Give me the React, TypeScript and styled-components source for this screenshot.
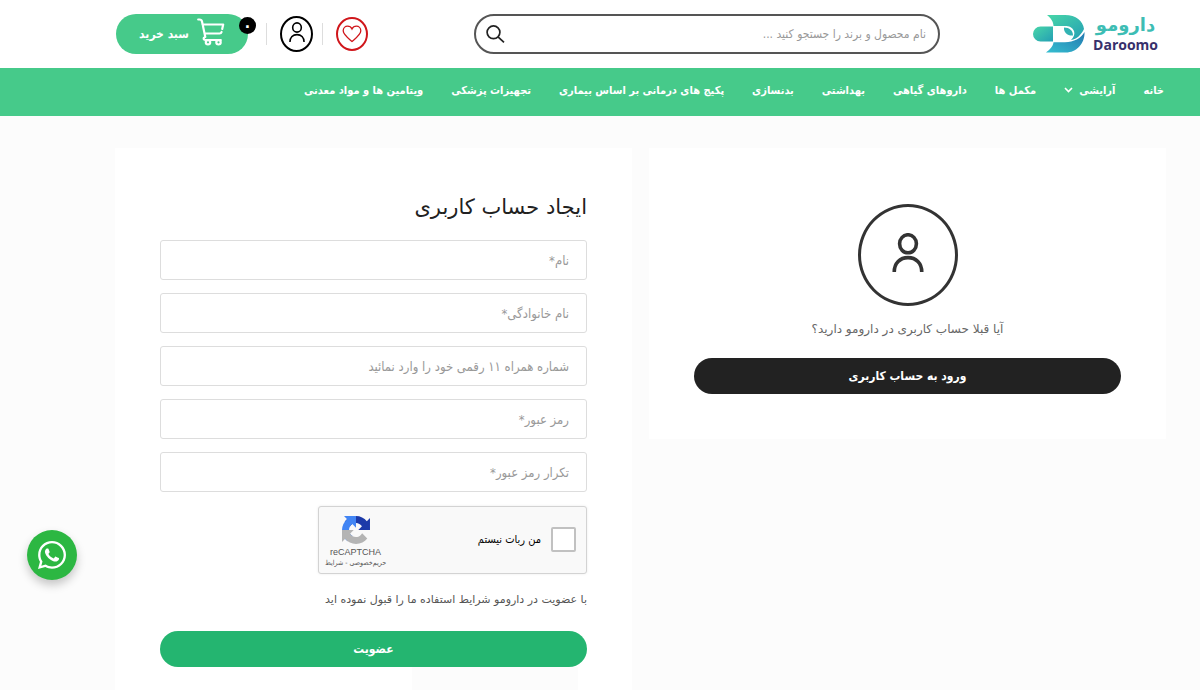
import React from "react";
import styled, { createGlobalStyle } from "styled-components";
import { FaWhatsapp } from "react-icons/fa";

const condensed = `"DejaVu Sans Condensed", "DejaVu Sans", sans-serif`;

const GlobalStyle = createGlobalStyle`
  *, *::before, *::after { box-sizing: border-box; }
  body {
    margin: 0;
    background: #fcfcfc;
    color: #212121;
    font-family: "DejaVu Sans", sans-serif;
    font-size: 12px;
  }
  a { color: inherit; text-decoration: none; }
  button, input { font: inherit; }
`;

const Page = styled.div`
  direction: rtl;
  display: flex;
  flex-direction: column;
  min-height: 100vh;
`;

const Header = styled.header`
  display: grid;
  grid-template-columns: 226px minmax(0, 1fr) 358px;
  align-items: center;
  height: 68px;
  padding: 0 34px 0 116px;
  background: #fff;
`;

const Logo = styled.a`
  display: flex;
  align-items: center;
  gap: 8px;
  padding-right: 8px;
`;

const LogoWords = styled.span`
  display: flex;
  flex-direction: column;
  align-items: center;
`;

const LogoFa = styled.span`
  color: #3dbdb4;
  font-size: 18px;
  font-weight: 700;
  line-height: 20px;
`;

const LogoEn = styled.span`
  color: #37306b;
  font-family: "Open Sans", sans-serif;
  font-size: 14px;
  font-weight: 700;
  line-height: 19px;
`;

const Search = styled.form`
  display: flex;
  align-items: center;
  height: 40px;
  padding: 0 12px 0 10px;
  border: 2px solid #555;
  border-radius: 20px;
`;

const SearchInput = styled.input`
  flex: 1;
  min-width: 0;
  padding: 0;
  border: 0;
  outline: 0;
  background: none;
  font-family: ${condensed};
  &::placeholder { color: #999; opacity: 1; }
`;

const IconButton = styled.button`
  display: flex;
  padding: 0;
  border: 0;
  background: none;
`;

const Actions = styled.div`
  display: flex;
  align-items: center;
  justify-content: flex-end;
`;

const Round = styled.a<{ $color: string; $w: number; $h: number; $lift?: number }>`
  display: flex;
  align-items: center;
  justify-content: center;
  width: ${(p) => p.$w}px;
  height: ${(p) => p.$h}px;
  padding-bottom: ${(p) => p.$lift ?? 0}px;
  border: 2px solid ${(p) => p.$color};
  border-radius: 50%;
  color: ${(p) => p.$color};
`;

const Separator = styled.span`
  width: 1px;
  height: 22px;
  margin: 0 13px 0 9px;
  background: #ddd;
`;

const Cart = styled.a`
  position: relative;
  display: flex;
  align-items: center;
  justify-content: center;
  gap: 8px;
  width: 132px;
  height: 40px;
  margin-inline-start: 9px;
  border-radius: 20px;
  background: #46ca8a;
  color: #fff;
  font-family: ${condensed};
  font-weight: 700;
  svg { margin-bottom: 4px; }
`;

const Badge = styled.span`
  position: absolute;
  top: 3px;
  right: -8px;
  width: 17px;
  height: 17px;
  border-radius: 50%;
  background: #000;
  font-size: 16px;
  line-height: 17px;
  text-align: center;
`;

const Nav = styled.nav`
  display: flex;
  align-items: center;
  gap: 28px;
  height: 48px;
  padding: 0 36px 4px;
  background: #46ca8a;
  color: #fff;
  font-family: ${condensed};
  font-size: 11px;
  font-weight: 700;
  white-space: nowrap;
`;

const NavLink = styled.a`
  display: flex;
  align-items: center;
  gap: 6px;
`;

const Main = styled.main`
  flex: 1;
  display: grid;
  grid-template-columns: 1fr 1fr;
  gap: 17px;
  padding: 32px 34px 0 115px;
`;

const Card = styled.section<{ $short?: boolean }>`
  display: flex;
  flex-direction: column;
  align-self: ${(p) => (p.$short ? "start" : "stretch")};
  padding: ${(p) => (p.$short ? "56px 45px 45px" : "43px 45px 0")};
  background: #fff;
`;

const Avatar = styled.span`
  display: flex;
  align-items: center;
  justify-content: center;
  align-self: center;
  width: 100px;
  height: 102px;
  padding-bottom: 6px;
  border: 3px solid #333;
  border-radius: 50%;
  color: #333;
`;

const Question = styled.p`
  margin: 14px 0 20px;
  color: #666;
  line-height: 18px;
  text-align: center;
`;

const Title = styled.h1`
  margin: 0 0 17px;
  font-size: 21px;
  font-weight: 400;
  line-height: 32px;
`;

const Pill = styled.button<{ $color: string }>`
  width: 100%;
  height: 36px;
  padding: 0;
  border: 0;
  border-radius: 18px;
  background: ${(p) => p.$color};
  color: #fff;
  font-family: ${condensed};
  font-weight: 700;
`;

const Form = styled.form`
  display: flex;
  flex-direction: column;
`;

const Field = styled.input`
  width: 100%;
  height: 40px;
  margin-bottom: 13px;
  padding: 0 17px;
  border: 1px solid #ddd;
  border-radius: 3px;
  background: #fff;
  font-family: ${condensed};
  font-size: 13px;
  &::placeholder { color: #999; opacity: 1; }
`;

const Captcha = styled.div`
  display: flex;
  align-items: center;
  justify-content: space-between;
  width: 269px;
  height: 68px;
  margin-top: 1px;
  padding: 0 10px 0 6px;
  border: 1px solid #d3d3d3;
  border-radius: 3px;
  background: #f9f9f9;
  box-shadow: 0 0 3px rgba(0, 0, 0, 0.08);
`;

const CaptchaLabel = styled.label`
  display: flex;
  align-items: center;
  gap: 10px;
  padding-bottom: 2px;
  color: #000;
  font-family: ${condensed};
  font-size: 11px;
`;

const Tick = styled.input`
  appearance: none;
  width: 25px;
  height: 25px;
  margin: 0;
  border: 2px solid #c1c1c1;
  border-radius: 2px;
  background: #fff;
`;

const CaptchaBrand = styled.div`
  display: flex;
  flex-direction: column;
  align-items: center;
  padding-top: 5px;
  color: #555;
  font-family: "Liberation Sans", sans-serif;
  font-size: 9px;
  line-height: 11px;
  white-space: nowrap;
  svg { margin-bottom: 3px; }
`;

const CaptchaTerms = styled.span`
  font-family: ${condensed};
  font-size: 7px;
`;

const Terms = styled.p`
  margin: 17px 0 22px;
  color: #555;
  font-size: 11px;
  line-height: 18px;
`;

const Notice = styled.div`
  flex: 1;
  width: 166px;
  min-height: 23px;
  margin-right: 9px;
  background: #fcfcfc;
`;

const WhatsApp = styled.a`
  position: fixed;
  bottom: 110px;
  left: 27px;
  display: flex;
  align-items: center;
  justify-content: center;
  width: 50px;
  height: 50px;
  border-radius: 50%;
  background: #2cb742;
  box-shadow: 0 5px 10px rgba(0, 0, 0, 0.22);
  color: #fff;
`;

const UserIcon = ({ w, h, stroke }: { w: number; h: number; stroke: number }) => (
  <svg width={w} height={h} viewBox="0 0 30 38" fill="none" stroke="currentColor" strokeWidth={stroke}>
    <ellipse cx="15" cy="10.500" rx="8.200" ry="8.800" />
    <path d="M1.600 38C1.600 29.500 7.200 24 15 24s13.400 5.500 13.400 14" />
  </svg>
);

const HeartIcon = () => (
  <svg width="20" height="18" viewBox="0 0 20 18" fill="none" stroke="currentColor" strokeWidth="1.300">
    <path d="M10 16.500C7 13.800 1.200 9.500 1.200 5.700 1.200 3 3.200 1.200 5.600 1.200 7.500 1.200 9.200 2.300 10 4c.8-1.700 2.500-2.800 4.400-2.800 2.400 0 4.400 1.800 4.400 4.500 0 3.800-5.800 8.100-8.800 10.800z" />
  </svg>
);

const CartIcon = () => (
  <svg width="28" height="28" viewBox="0 0 28 28" fill="none" stroke="currentColor" strokeWidth="2.200" strokeLinecap="round" strokeLinejoin="round">
    <path d="M1.200 1.500h1.300c1.500 0 2.200.6 2.500 2L8.300 19M5.500 6.500h20.700l-1 4.500M7.600 15.500h15c1.200 0 1.700-.5 2-1.500M8.300 19c-2 0-2.300 3 0 3h15.500" />
    <circle cx="11" cy="24.300" r="2.200" />
    <circle cx="21.500" cy="24.300" r="2.200" />
  </svg>
);

const SearchIcon = () => (
  <svg width="19" height="18" viewBox="0 0 19 18" fill="none" stroke="#222" strokeWidth="1.700">
    <circle cx="7.500" cy="7.300" r="6.400" />
    <path d="M12 11.800l6 5.500" />
  </svg>
);

const Chevron = () => (
  <svg width="9" height="6" viewBox="0 0 9 6" fill="none" stroke="currentColor" strokeWidth="1.600">
    <path d="M1 1l3.500 3.500L8 1" />
  </svg>
);

const LogoMark = () => (
  <svg width="52" height="38" viewBox="0 0 52 38">
    <defs>
      <linearGradient id="markTop" x1="0" y1="0" x2="1" y2="1">
        <stop offset="0" stopColor="#48d6a8" />
        <stop offset="1" stopColor="#249fb4" />
      </linearGradient>
      <linearGradient id="markLow" x1="0" y1="1" x2="1" y2="0">
        <stop offset="0" stopColor="#35bfd0" />
        <stop offset="1" stopColor="#2378b0" />
      </linearGradient>
    </defs>
    <path d="M7.500 11.500H20v15H7.500a7.500 7.500 0 010-15z" fill="url(#markTop)" />
    <path d="M14 0h18c11 0 18 6 19 14-3 6-7 10-13 11 3-3 4-6 3-9-2-4-5-5-9-5H20.500C20.500 7 18 3 14 0z" fill="url(#markTop)" />
    <path d="M51.500 17C52 29 43 37.500 33 37.500H13c4-3 7-6 7.500-10.200H32c9 0 16-4.300 19.500-10.300z" fill="url(#markLow)" />
    <path d="M31 12.500c5.500 0 9 3 9 8-5.500.5-9.500-3-9-8z" fill="#32b3b3" />
  </svg>
);

const arrow =
  "M28 14l-.016-.577V2l-3.143 3.143C22.26 1.983 18.346 0 13.987 0 9.393 0 5.310 2.153 2.727 5.490l5.150 5.205a6.820 6.820 0 0 1 2.087-2.342c.93-.725 2.250-1.320 4.078-1.320 2.300 0 4.700 1.400 5.902 3.319L16.298 14z";

const CaptchaLogo = () => (
  <svg width="28" height="28" viewBox="0 0 28 28">
    <path d={arrow} fill="#1c3aa9" />
    <path d={arrow} fill="#4285f4" transform="rotate(-90 14 14)" />
    <path d={arrow} fill="#b4b4b4" transform="rotate(180 14 14)" />
  </svg>
);

const navItems = [
  "خانه",
  "آرایشی",
  "مکمل ها",
  "داروهای گیاهی",
  "بهداشتی",
  "بدنسازی",
  "پکیج های درمانی بر اساس بیماری",
  "تجهیزات پزشکی",
  "ویتامین ها و مواد معدنی",
];

const fields = [
  { type: "text", label: "نام*" },
  { type: "text", label: "نام خانوادگی*" },
  { type: "text", label: "شماره همراه ۱۱ رقمی خود را وارد نمائید" },
  { type: "password", label: "رمز عبور*" },
  { type: "password", label: "تکرار رمز عبور*" },
];

export default function App() {
  return (
    <Page lang="fa">
      <GlobalStyle />
      <Header>
        <Logo href="#">
          <LogoWords>
            <LogoFa>دارومو</LogoFa>
            <LogoEn>Daroomo</LogoEn>
          </LogoWords>
          <LogoMark />
        </Logo>
        <Search role="search">
          <SearchInput aria-label="جستجو" placeholder="نام محصول و برند را جستجو کنید ..." />
          <IconButton type="button" aria-label="جستجو">
            <SearchIcon />
          </IconButton>
        </Search>
        <Actions>
          <Round href="#" aria-label="علاقه مندی ها" $color="#d0161b" $w={32} $h={34}>
            <HeartIcon />
          </Round>
          <Separator />
          <Round href="#" aria-label="حساب کاربری" $color="#000" $w={33} $h={36} $lift={5}>
            <UserIcon w={16} h={20} stroke={3} />
          </Round>
          <Separator />
          <Cart href="#">
            <CartIcon />
            سبد خرید
            <Badge>۰</Badge>
          </Cart>
        </Actions>
      </Header>
      <Nav>
        {navItems.map((item, i) => (
          <NavLink href="#" key={item}>
            {item}
            {i === 1 && <Chevron />}
          </NavLink>
        ))}
      </Nav>
      <Main>
        <Card $short>
          <Avatar>
            <UserIcon w={34} h={39} stroke={3.5} />
          </Avatar>
          <Question>آیا قبلا حساب کاربری در دارومو دارید؟</Question>
          <Pill type="button" $color="#222">ورود به حساب کاربری</Pill>
        </Card>
        <Card>
          <Title>ایجاد حساب کاربری</Title>
          <Form>
            {fields.map((f) => (
              <Field key={f.label} type={f.type} aria-label={f.label} placeholder={f.label} />
            ))}
            <Captcha>
              <CaptchaLabel>
                <Tick type="checkbox" />
                من ربات نیستم
              </CaptchaLabel>
              <CaptchaBrand>
                <CaptchaLogo />
                <span>reCAPTCHA</span>
                <CaptchaTerms>حریم‌خصوصی - شرایط</CaptchaTerms>
              </CaptchaBrand>
            </Captcha>
            <Terms>با عضویت در دارومو شرایط استفاده ما را قبول نموده اید</Terms>
            <Pill type="submit" $color="#24b570">عضویت</Pill>
          </Form>
          <Notice />
        </Card>
      </Main>
      <WhatsApp href="#" aria-label="WhatsApp">
        <FaWhatsapp size={32} />
      </WhatsApp>
    </Page>
  );
}
